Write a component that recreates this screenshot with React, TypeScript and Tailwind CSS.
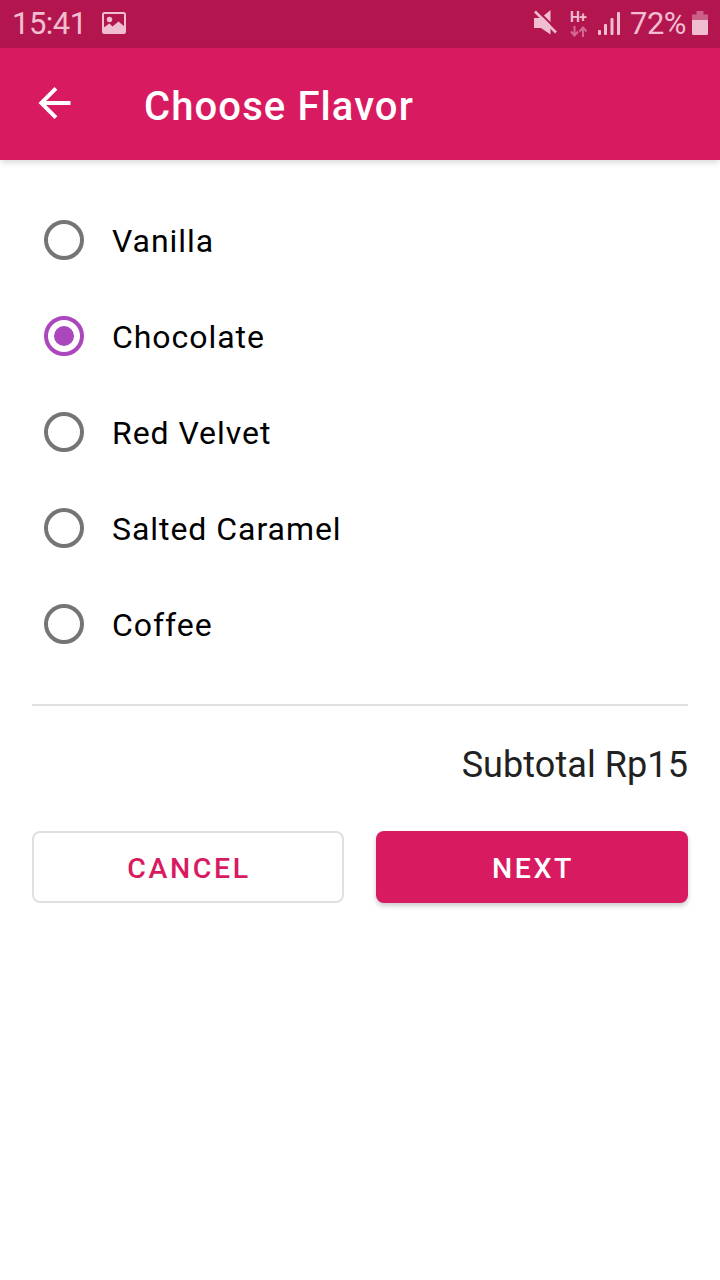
import React from "react";

const flavors = ["Vanilla", "Chocolate", "Red Velvet", "Salted Caramel", "Coffee"];

function StatusBar() {
  return (
    <div className="flex h-12 items-center justify-between bg-[#b3164f] px-3 text-[31px] leading-[48px] text-[#f0bed0]">
      <div className="flex items-center">
        <span className="w-[90px] tracking-[-0.5px]">15:41</span>
        <svg className="-mt-0.5" width="24" height="22" viewBox="0 0 24 22" fill="none">
          <rect x="1" y="1" width="22" height="20" rx="1.5" stroke="currentColor" strokeWidth="2" />
          <circle cx="7.5" cy="7.5" r="2.7" fill="currentColor" />
          <path d="M1 16L7.5 11.5L10.5 14.5L16.5 9.5L23 15V21H1Z" fill="currentColor" />
        </svg>
      </div>
      <div className="flex items-center">
        <svg className="-mt-0.5" width="24" height="26" viewBox="0 0 24 26" fill="none">
          <path d="M0 8H7L16.5 0V24.5L7 18H0Z" fill="currentColor" />
          <path d="M3 0L24 21" stroke="#b3164f" strokeWidth="2" />
          <path d="M1 1.5L22 22.5" stroke="currentColor" strokeWidth="2.5" />
        </svg>
        <div className="ml-3 flex w-[18px] flex-col gap-0.5">
          <span className="-mt-0.5 h-[14px] text-[14px] leading-[14px] font-bold tracking-[-0.6px]">H+</span>
          <svg width="18" height="11" viewBox="0 0 18 11" fill="none" stroke="#d06a90" strokeWidth="2">
            <path d="M4.5 0V9.5M1 5.5L4.5 9.5L8 5.5M13 11V1.5M9.5 5.5L13 1.5L16.5 5.5" />
          </svg>
        </div>
        <svg className="-mt-0.5 ml-2.5" width="22" height="24" viewBox="0 0 22 24" fill="currentColor">
          <rect x="0" y="19" width="3" height="5" rx="1" />
          <rect x="6" y="13" width="3" height="11" rx="1" />
          <rect x="12.5" y="7" width="3" height="17" rx="1" />
          <rect x="19" y="1" width="3" height="23" rx="1" />
        </svg>
        <span className="ml-2.5 w-[62px] tracking-[-0.5px]">72%</span>
        <svg className="-mt-0.5" width="16" height="24" viewBox="0 0 16 24">
          <path d="M0 3.5H4.5V0H11.5V3.5H16V9H0Z" fill="#cc5f87" />
          <path d="M0 9H16V22.5Q16 24 14.5 24H1.5Q0 24 0 22.5Z" fill="currentColor" />
        </svg>
      </div>
    </div>
  );
}

function Radio({ checked }: { checked: boolean }) {
  return (
    <span className={checked ? "flex size-10 items-center justify-center rounded-full border-4 border-[#ab47bc]" : "size-10 rounded-full border-4 border-[#757575]"}>
      {checked && <span className="size-5 rounded-full bg-[#ab47bc]" />}
    </span>
  );
}

export default function App() {
  return (
    <div className="h-[1280px] w-[720px] overflow-hidden bg-white font-['Roboto',sans-serif]">
      <StatusBar />
      <header className="flex h-28 items-center bg-[#d81b60] pl-[30px] text-white shadow-[0_4px_6px_-1px_rgba(0,0,0,0.14)]">
        <svg className="-mt-0.5" width="49" height="48" viewBox="0 0 24 24" fill="currentColor">
          <path d="M20 11H7.83l5.59-5.59L12 4l-8 8 8 8 1.41-1.41L7.83 13H20v-2z" />
        </svg>
        <h1 className="ml-[65px] pt-[5px] text-[40px] font-medium tracking-[1.1px]">Choose Flavor</h1>
      </header>
      <main className="px-8 pt-8">
        <div className="flex flex-col pl-3">
          {flavors.map((name) => (
            <label key={name} className="flex h-24 items-center gap-7 text-[32px] tracking-[0.95px] text-black">
              <Radio checked={name === "Chocolate"} />
              <span className="pt-0.5">{name}</span>
            </label>
          ))}
        </div>
        <div className="mt-8 h-0.5 bg-[#e0e0e0]" />
        <p className="mt-8 text-right text-[36px] leading-[54px] tracking-[0.08px] text-[#212121]">Subtotal Rp15</p>
        <div className="mt-[39px] grid grid-cols-2 gap-8 text-[28.5px] font-medium tracking-[2.6px]">
          <button className="h-18 rounded-lg border-2 border-[#e0e0e0] pt-1 pl-0.5 text-[#d81b60]">CANCEL</button>
          <button className="h-18 rounded-lg bg-[#d81b60] pt-1 pl-0.5 text-white shadow-[0_3px_5px_rgba(0,0,0,0.2)]">NEXT</button>
        </div>
      </main>
    </div>
  );
}
